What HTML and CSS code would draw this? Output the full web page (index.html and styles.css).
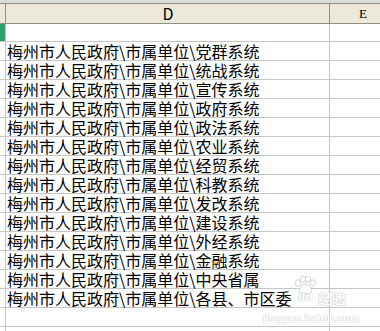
FILE: index.html
```html
<!DOCTYPE html>
<html>
<head>
<meta charset="utf-8">
<link rel="stylesheet" href="styles.css">
</head>
<body>
<div class="sheet">
  <div class="topstrip"></div>
  <div class="hrow">
    <div class="rh"></div>
    <div class="cd hc">D</div>
    <div class="ce hc">E</div>
  </div>
  <div class="row first">
    <div class="rh sel"></div>
    <div class="cd"></div>
    <div class="ce"></div>
  </div>
  <div class="row"><div class="rh"></div><div class="cd">梅州市人民政府\市属单位\党群系统</div><div class="ce"></div></div>
  <div class="row"><div class="rh"></div><div class="cd">梅州市人民政府\市属单位\统战系统</div><div class="ce"></div></div>
  <div class="row"><div class="rh"></div><div class="cd">梅州市人民政府\市属单位\宣传系统</div><div class="ce"></div></div>
  <div class="row"><div class="rh"></div><div class="cd">梅州市人民政府\市属单位\政府系统</div><div class="ce"></div></div>
  <div class="row"><div class="rh"></div><div class="cd">梅州市人民政府\市属单位\政法系统</div><div class="ce"></div></div>
  <div class="row"><div class="rh"></div><div class="cd">梅州市人民政府\市属单位\农业系统</div><div class="ce"></div></div>
  <div class="row"><div class="rh"></div><div class="cd">梅州市人民政府\市属单位\经贸系统</div><div class="ce"></div></div>
  <div class="row"><div class="rh"></div><div class="cd">梅州市人民政府\市属单位\科教系统</div><div class="ce"></div></div>
  <div class="row"><div class="rh"></div><div class="cd">梅州市人民政府\市属单位\发改系统</div><div class="ce"></div></div>
  <div class="row"><div class="rh"></div><div class="cd">梅州市人民政府\市属单位\建设系统</div><div class="ce"></div></div>
  <div class="row"><div class="rh"></div><div class="cd">梅州市人民政府\市属单位\外经系统</div><div class="ce"></div></div>
  <div class="row"><div class="rh"></div><div class="cd">梅州市人民政府\市属单位\金融系统</div><div class="ce"></div></div>
  <div class="row"><div class="rh"></div><div class="cd">梅州市人民政府\市属单位\中央省属</div><div class="ce"></div></div>
  <div class="row"><div class="rh"></div><div class="cd">梅州市人民政府\市属单位\各县、市区委</div><div class="ce"></div></div>
  <div class="row"><div class="rh"></div><div class="cd"></div><div class="ce"></div></div>
  <div class="row"><div class="rh"></div><div class="cd"></div><div class="ce"></div></div>

  <div class="watermark">
    <svg class="paw" width="24" height="20" viewBox="0 0 24 20">
      <g fill="#ffffff" stroke="#d2d2d2" stroke-width="1">
        <ellipse cx="5" cy="8" rx="2.6" ry="3.2"/>
        <ellipse cx="10" cy="4" rx="2.6" ry="3.2"/>
        <ellipse cx="15" cy="4" rx="2.6" ry="3.2"/>
        <ellipse cx="20" cy="8" rx="2.6" ry="3.2"/>
        <path d="M12.5 9 C9 9 6 14 6.5 16.5 C7 19 10 18.5 12.5 18.5 C15 18.5 18 19 18.5 16.5 C19 14 16 9 12.5 9 Z"/>
      </g>
    </svg>
    <span class="du">du</span>
    <span class="jy">经验</span>
    <span class="url">jingyan.baidu.com</span>
  </div>
</div>
</body>
</html>
```

FILE: styles.css
```css
html, body {
  margin: 0;
  padding: 0;
  background: #ffffff;
}
.sheet {
  position: relative;
  width: 380px;
  height: 331px;
  overflow: hidden;
}
.topstrip {
  height: 3px;
  background: #dcdcdc;
}
.hrow {
  display: flex;
  height: 19px;
  background: #ece9d8;
  border-top: 1px solid #8f8f82;
  border-bottom: 1px solid #8f8f82;
}
.hrow .rh,
.hrow .cd {
  border-right-color: #8f8f82;
}
.hc {
  font-family: "Liberation Serif", serif;
  font-size: 13px;
  line-height: 19px;
  text-align: center;
  color: #000;
}
.hrow .ce {
  flex: none;
  width: 66px;
}
.row {
  display: flex;
  height: 18px;
  border-bottom: 1px solid #c6c6c6;
}
.row.first {
  height: 17px;
}
.rh {
  width: 5px;
  flex: none;
  border-right: 1px solid #c6c6c6;
}
.rh.sel {
  background: #2f9e6e;
}
.cd {
  width: 324px;
  flex: none;
  border-right: 1px solid #c6c6c6;
  font-family: "Noto Sans CJK SC", sans-serif;
  font-size: 16px;
  line-height: 18px;
  padding-left: 1px;
  box-sizing: border-box;
  white-space: nowrap;
  overflow: visible;
  color: #000;
}
.ce {
  flex: 1;
}
.watermark {
  position: absolute;
  left: 262px;
  top: 274px;
  width: 100px;
  height: 50px;
}
.paw {
  position: absolute;
  left: 31px;
  top: 1px;
}
.du {
  position: absolute;
  left: 36px;
  top: 16px;
  font-family: "Liberation Sans", sans-serif;
  font-weight: bold;
  font-size: 12px;
  line-height: 14px;
  color: #ffffff;
  text-shadow: 0 0 1px #bbbbbb, 0 0 1px #bbbbbb;
}
.jy {
  position: absolute;
  left: 56px;
  top: 16px;
  font-family: "Noto Sans CJK SC", sans-serif;
  font-weight: bold;
  font-size: 14px;
  line-height: 16px;
  color: #ffffff;
  text-shadow: 0 0 1px #bbbbbb, 0 0 1px #bbbbbb;
}
.url {
  position: absolute;
  left: 1px;
  top: 38px;
  font-family: "Liberation Sans", sans-serif;
  font-weight: bold;
  font-size: 11px;
  line-height: 12px;
  color: #ffffff;
  text-shadow: 0 0 1px #c8c8c8, 0 0 1px #c8c8c8;
}
```
